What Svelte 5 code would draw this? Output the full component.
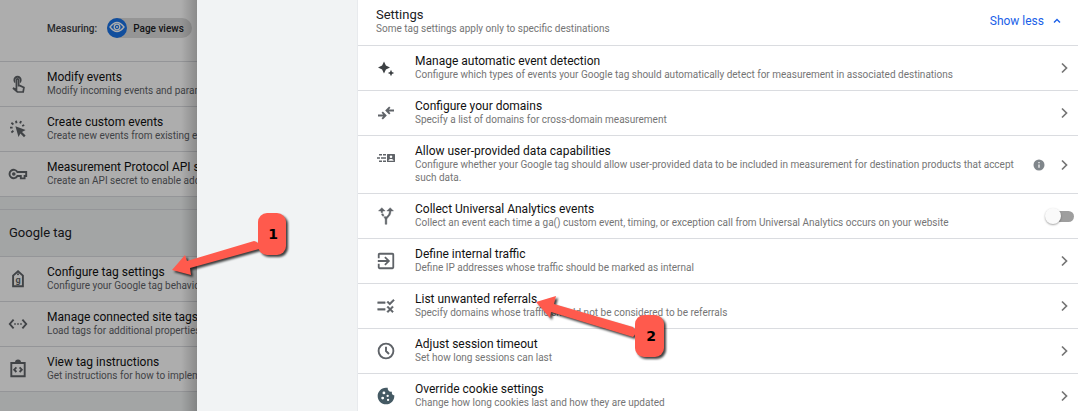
<script>
  let collectEvents = $state(false);

  // fill = solid parts, line = stroked parts
  const icons = {
    touch: {
      box: 22,
      fill: 'M8 10.24V6.5C8 5.12 9.12 4 10.5 4S13 5.12 13 6.5v3.74c1.21-.81 2-2.18 2-3.74C15 4.01 12.99 2 10.5 2S6 4.01 6 6.5c0 1.56.79 2.93 2 3.74z',
      line: 'M9.3 17V6.6a1.2 1.2 0 0 1 2.4 0v6.2h1.4l4.4 2.1-.8 4.9h-6.4l-4.8-4.4z'
    },
    click: {
      box: 20,
      fill: 'M7.4 7.2l10.2 3.8-3.6 2 3.6 3.6-1.6 1.6-3.6-3.6-1.9 3.5z',
      line: 'M2 8.6h2.6M3.4 3.8l2 1.6M8 1.7l.5 2.6M13 2l-.9 2.3M16.2 6l-2 1M3.4 13.4l2-1.6'
    },
    key: {
      box: 20,
      fill: 'M5.8 8.2a1.8 1.8 0 1 0 0 3.6 1.8 1.8 0 0 0 0-3.6z',
      line: 'M9.4 8h8.8v4h-1.6v2.4h-3.8V12H9.4a4.2 4.2 0 1 1 0-4z'
    },
    tag: { box: 20, fill: 'M10 4.2a1 1 0 1 0 0 2 1 1 0 0 0 0-2z', line: 'M10 2.2l4.9 4.4v10.6H5.1V6.6z', letter: 'g' },
    code: {
      box: 20,
      fill: 'M6.2 9.2h1.6v1.6H6.2zM9.2 9.2h1.6v1.6H9.2zM12.2 9.2h1.6v1.6h-1.6z',
      line: 'M5.6 5.6L1.8 10l3.8 4.4M14.4 5.6l3.8 4.4-3.8 4.4'
    },
    clipboard: {
      box: 20,
      fill: 'M7 3.4a3 3 0 0 1 6 0v1H7z',
      line: 'M3.3 4h13.4v13.2H3.3zM8.4 8.4l-2.2 2.3L8.4 13M11.6 8.4l2.2 2.3-2.2 2.3'
    },
    sparkle: {
      box: 20,
      fill: 'M8 3.4l1.9 4.2L14 9.5l-4.1 1.9L8 15.6l-1.9-4.2L2 9.5l4.1-1.9zM15 11.8l1 2.2 2.2 1-2.2 1-1 2.2-1-2.2-2.2-1 2.2-1z'
    },
    merge: { box: 20, line: 'M2 12.5h7M6.2 9.2l3.3 3.3-3.3 3.3M18 7.5h-7M13.8 4.2l-3.3 3.3 3.3 3.3' },
    userData: {
      box: 20,
      fill: 'M11.6 6h6.8q.6 0 .6.6v6.8q0 .6-.6.6h-6.8q-.6 0-.6-.6V6.6q0-.6.6-.6zM15 7.4a1.3 1.3 0 1 0 0 2.6 1.3 1.3 0 0 0 0-2.6zM12.4 12.8h5.2c0-2.4-5.2-2.4-5.2 0zM3 6h3v1.4H3zM7 6h3v1.4H7zM1 9.3h3v1.4H1zM5 9.3h5v1.4H5zM3 12.6h3V14H3zM7 12.6h3V14H7z'
    },
    fork: {
      box: 24,
      fill: 'M9.78 11.16l-1.42 1.42c-.68-.69-1.34-1.58-1.79-2.94l1.94-.49c.32.89.77 1.5 1.27 2.01zM11 6L7 2 3 6h3.02c.02.81.08 1.54.19 2.17l1.94-.49C8.08 7.2 8.03 6.63 8.02 6H11zm10 0l-4-4-4 4h2.99c-.1 3.68-1.28 4.75-2.54 5.88-.5.44-1.01.92-1.45 1.55-.34-.49-.73-.88-1.13-1.24L9.46 13.6c.93.85 1.54 1.54 1.54 3.4v5h2v-5c0-2.02.71-2.66 1.79-3.63 1.38-1.24 3.08-2.78 3.2-7.37H21z',
      bold: true
    },
    enter: {
      box: 22,
      fill: 'M9.09 14.59L10.5 16l5-5-5-5-1.41 1.41L11.67 10H2v2h9.67l-2.58 2.59zM18 2H4c-1.11 0-2 .9-2 2v4h2V4h14v14H4v-4H2v4c0 1.1.89 2 2 2h14c1.1 0 2-.9 2-2V4c0-1.1-.9-2-2-2z'
    },
    rule: {
      box: 24,
      fill: 'M16.54 11L13 7.46l1.41-1.41 2.12 2.12 4.24-4.24 1.41 1.41L16.54 11zM11 7H2v2h9V7zm10 6.41L19.59 12 17 14.59 14.41 12 13 13.41 15.59 16 13 18.59 14.41 20 17 17.41 19.59 20 21 18.59 18.41 16 21 13.41zM11 15H2v2h9v-2z',
      bold: true
    },
    clock: { box: 20, line: 'M10 2.6a7.4 7.4 0 1 0 0 14.8 7.4 7.4 0 0 0 0-14.8zM10 5.8V10l3 3' },
    cookie: {
      box: 24,
      fill: 'M21.95 10.99c-1.79-.03-3.7-1.95-2.68-4.22-2.98 1-5.77-1.59-5.19-4.56C6.95.71 2 6.58 2 12c0 5.52 4.48 10 10 10 5.89 0 10.54-5.08 9.95-11.01zM8 16.2a1.7 1.7 0 1 1 0-3.4 1.7 1.7 0 0 1 0 3.4zM9.5 10a1.7 1.7 0 1 1 0-3.4 1.7 1.7 0 0 1 0 3.4zM14 13.2a1.4 1.4 0 1 1 0-2.8 1.4 1.4 0 0 1 0 2.8zM14.5 18a1.4 1.4 0 1 1 0-2.8 1.4 1.4 0 0 1 0 2.8z'
    }
  };

  const eventRows = [
    { icon: 'touch', title: 'Modify events', text: 'Modify incoming events and parameters' },
    { icon: 'click', title: 'Create custom events', text: 'Create new events from existing events' },
    { icon: 'key', title: 'Measurement Protocol API secrets', text: 'Create an API secret to enable additional events' }
  ];

  const tagRows = [
    { icon: 'tag', title: 'Configure tag settings', text: 'Configure your Google tag behavior' },
    { icon: 'code', title: 'Manage connected site tags', text: 'Load tags for additional properties' },
    { icon: 'clipboard', title: 'View tag instructions', text: 'Get instructions for how to implement' }
  ];

  const settings = [
    {
      icon: 'sparkle',
      title: 'Manage automatic event detection',
      text: 'Configure which types of events your Google tag should automatically detect for measurement in associated destinations'
    },
    { icon: 'merge', title: 'Configure your domains', text: 'Specify a list of domains for cross-domain measurement' },
    {
      icon: 'userData',
      title: 'Allow user-provided data capabilities',
      text: 'Configure whether your Google tag should allow user-provided data to be included in measurement for destination products that accept such data.',
      info: true
    },
    {
      icon: 'fork',
      title: 'Collect Universal Analytics events',
      text: 'Collect an event each time a ga() custom event, timing, or exception call from Universal Analytics occurs on your website',
      toggle: true
    },
    { icon: 'enter', title: 'Define internal traffic', text: 'Define IP addresses whose traffic should be marked as internal' },
    { icon: 'rule', title: 'List unwanted referrals', text: 'Specify domains whose traffic should not be considered to be referrals' },
    { icon: 'clock', title: 'Adjust session timeout', text: 'Set how long sessions can last' },
    { icon: 'cookie', title: 'Override cookie settings', text: 'Change how long cookies last and how they are updated' }
  ];
</script>

{#snippet icon(name)}
  {@const i = icons[name]}
  <svg class="icon {name}" viewBox="0 0 {i.box} {i.box}" aria-hidden="true">
    {#if i.fill}<path class="fill" class:bold={i.bold} d={i.fill} />{/if}
    {#if i.line}<path class="line" d={i.line} />{/if}
    {#if i.letter}<text x="10" y="13.6" text-anchor="middle">{i.letter}</text>{/if}
  </svg>
{/snippet}

{#snippet navRow(row)}
  <a class="row" href="#{row.icon}">
    {@render icon(row.icon)}
    <span class="copy">
      <span class="title">{row.title}</span>
      <span class="text">{row.text}</span>
    </span>
  </a>
{/snippet}

<div class="page">
  <nav class="behind">
    <div class="measuring">
      <span>Measuring:</span>
      <span class="chip">
        <span class="eye">
          <svg viewBox="0 0 20 20" aria-hidden="true">
            <path d="M3 9Q10 0 17 9Q10 18 3 9z" />
            <circle cx="10" cy="9" r="2.8" />
            <circle class="pupil" cx="10" cy="9" r="1" />
          </svg>
        </span>
        Page views
      </span>
    </div>
    {#each eventRows as row}
      {@render navRow(row)}
    {/each}
    <div class="gap"></div>
    <h2 class="group">Google tag</h2>
    {#each tagRows as row}
      {@render navRow(row)}
    {/each}
  </nav>

  <div class="drawer">
    <main>
      <header>
        <div>
          <h1>Settings</h1>
          <p class="text">Some tag settings apply only to specific destinations</p>
        </div>
        <button class="less" type="button">
          Show less
          <svg viewBox="0 0 8 8" aria-hidden="true"><path d="M1 5.5l3-3 3 3" /></svg>
        </button>
      </header>

      {#each settings as row}
        <div class="row">
          {@render icon(row.icon)}
          <div class="copy">
            <div class="title" id="label-{row.icon}">{row.title}</div>
            <div class="text">{row.text}</div>
          </div>
          <div class="actions">
            {#if row.info}
              <svg class="info" viewBox="0 0 12 12" aria-hidden="true">
                <circle cx="6" cy="6" r="5.5" />
                <path d="M6 5.4v3.4M6 3v1.3" />
              </svg>
            {/if}
            {#if row.toggle}
              <input type="checkbox" role="switch" aria-labelledby="label-{row.icon}" bind:checked={collectEvents} />
            {:else}
              <button class="open" type="button" aria-labelledby="label-{row.icon}">
                <svg viewBox="0 0 12 12" aria-hidden="true"><path d="M4 1.5L8.5 6 4 10.5" /></svg>
              </button>
            {/if}
          </div>
        </div>
      {/each}
    </main>
  </div>

  <!-- numbered callouts over the page -->
  <svg class="callouts">
    <g class="callout">
      <path d="M172 270L185 255L187 261L254 241Q260 242 259 249L190 268L191 275z" />
      <rect x="258" y="213" width="28" height="42" rx="9" />
    </g>
    <text x="273" y="239">1</text>
    <g class="callout">
      <path d="M536 302L556 296L554 304L633 327Q638 332 633 337L551 312L550 318z" />
      <rect x="635" y="315" width="29" height="42" rx="9" />
    </g>
    <text x="651" y="341">2</text>
  </svg>
</div>

<style>
  :global(body) {
    margin: 0;
  }

  .page {
    position: relative;
    display: flex;
    height: 100vh;
    overflow: hidden;
    font-family: Roboto, "Liberation Sans", sans-serif;
    font-size: 12px;
    line-height: 13px;
    color: #202124;
  }

  h1,
  h2,
  p {
    margin: 0;
    font-weight: 400;
  }

  button {
    padding: 0;
    border: none;
    background: none;
    font: inherit;
    cursor: pointer;
  }

  /* page behind the drawer */
  .behind {
    position: relative;
    flex: 0 0 197px;
    overflow: hidden;
    white-space: nowrap;
    background: #f1f3f4;
  }

  .behind::after {
    content: "";
    position: absolute;
    inset: 0;
    background: linear-gradient(to left, rgba(0, 0, 0, 0.2), transparent 16px), rgba(0, 0, 0, 0.32);
    pointer-events: none;
  }

  .measuring {
    display: flex;
    align-items: center;
    gap: 10px;
    height: 20px;
    padding: 18px 0 23px 47px;
    border-bottom: 1px solid #dadce0;
    background: #fff;
    font-size: 10px;
    font-weight: 500;
    color: #3c4043;
  }

  .chip {
    display: flex;
    align-items: center;
    gap: 6px;
    padding-right: 8px;
    border-radius: 10px;
    background: #dcdcdc;
    color: #202124;
  }

  .eye {
    width: 20px;
    height: 20px;
    border-radius: 50%;
    background: #1a73e8;
  }

  .eye svg {
    display: block;
    fill: none;
    stroke: #fff;
    stroke-width: 1.3;
  }

  .eye .pupil {
    fill: #fff;
    stroke: none;
  }

  .row {
    display: flex;
    align-items: flex-start;
    padding: 9px 8px;
    border-bottom: 1px solid #dadce0;
    background: #fff;
    color: inherit;
    text-decoration: none;
  }

  .gap {
    height: 12px;
    border-bottom: 1px solid #dadce0;
  }

  .group {
    padding: 16px 9px;
    border-bottom: 1px solid #dadce0;
    font-size: 13px;
    line-height: 14px;
  }

  .icon {
    flex: none;
    width: 20px;
    height: 20px;
    margin: 3px 19px 0 0;
  }

  .fill {
    fill: #5f6368;
    fill-rule: evenodd;
  }

  .bold {
    stroke: #5f6368;
    stroke-width: 0.5;
  }

  .line {
    fill: none;
    stroke: #5f6368;
    stroke-width: 1.9;
  }

  .icon text {
    font-size: 9px;
    font-weight: 700;
    fill: #5f6368;
  }

  .sparkle .fill {
    fill: #3c4043;
  }

  .cookie .fill {
    fill: #455a64;
  }

  .copy {
    flex: 1;
    min-width: 0;
  }

  .title,
  .text {
    display: block;
  }

  .title {
    color: #111;
  }

  .text {
    font-size: 10px;
    color: #757575;
  }

  .behind .text {
    color: #5f6368;
  }

  /* drawer */
  .drawer {
    flex: 1;
    min-width: 0;
    padding-left: 160px;
    background: #f1f3f4;
  }

  main {
    border-left: 1px solid #e8eaed;
    background: #fff;
  }

  main .row {
    padding: 9px 4px 9px 18px;
  }

  header {
    display: flex;
    align-items: center;
    justify-content: space-between;
    padding: 7px 17px 10px 18px;
    border-bottom: 1px solid #dadce0;
  }

  h1 {
    font-size: 13px;
    line-height: 15px;
  }

  .less {
    display: flex;
    align-items: center;
    gap: 9px;
    color: #1a5fe8;
  }

  .less svg {
    width: 8px;
    height: 8px;
    fill: none;
    stroke: #1a5fe8;
    stroke-width: 1.4;
  }

  .actions {
    display: flex;
    align-items: center;
    align-self: center;
    gap: 9px;
    padding-left: 8px;
  }

  .info {
    width: 12px;
    height: 12px;
    fill: #80868b;
  }

  .info path {
    stroke: #fff;
    stroke-width: 1.2;
  }

  .open {
    display: flex;
    padding: 0 4px;
  }

  .open svg {
    width: 12px;
    height: 12px;
    fill: none;
    stroke: #757575;
    stroke-width: 1.7;
  }

  input {
    position: relative;
    appearance: none;
    width: 25px;
    height: 11px;
    margin: 0;
    border-radius: 6px;
    background: #9e9e9e;
    cursor: pointer;
  }

  input::before {
    content: "";
    position: absolute;
    top: -3px;
    left: -4px;
    width: 16px;
    height: 16px;
    border-radius: 50%;
    background: #fafafa;
    box-shadow: 0 1px 2px rgba(0, 0, 0, 0.35);
  }

  input:checked::before {
    left: 13px;
  }

  .callouts {
    position: absolute;
    inset: 0;
    width: 100%;
    height: 100%;
    pointer-events: none;
  }

  .callout {
    fill: #ff5a4d;
    filter: drop-shadow(2px 2px 1px rgba(0, 0, 0, 0.75));
  }

  .callouts text {
    font-family: "DejaVu Sans", sans-serif;
    font-size: 14px;
    font-weight: 700;
    text-anchor: middle;
    fill: #000;
  }
</style>
